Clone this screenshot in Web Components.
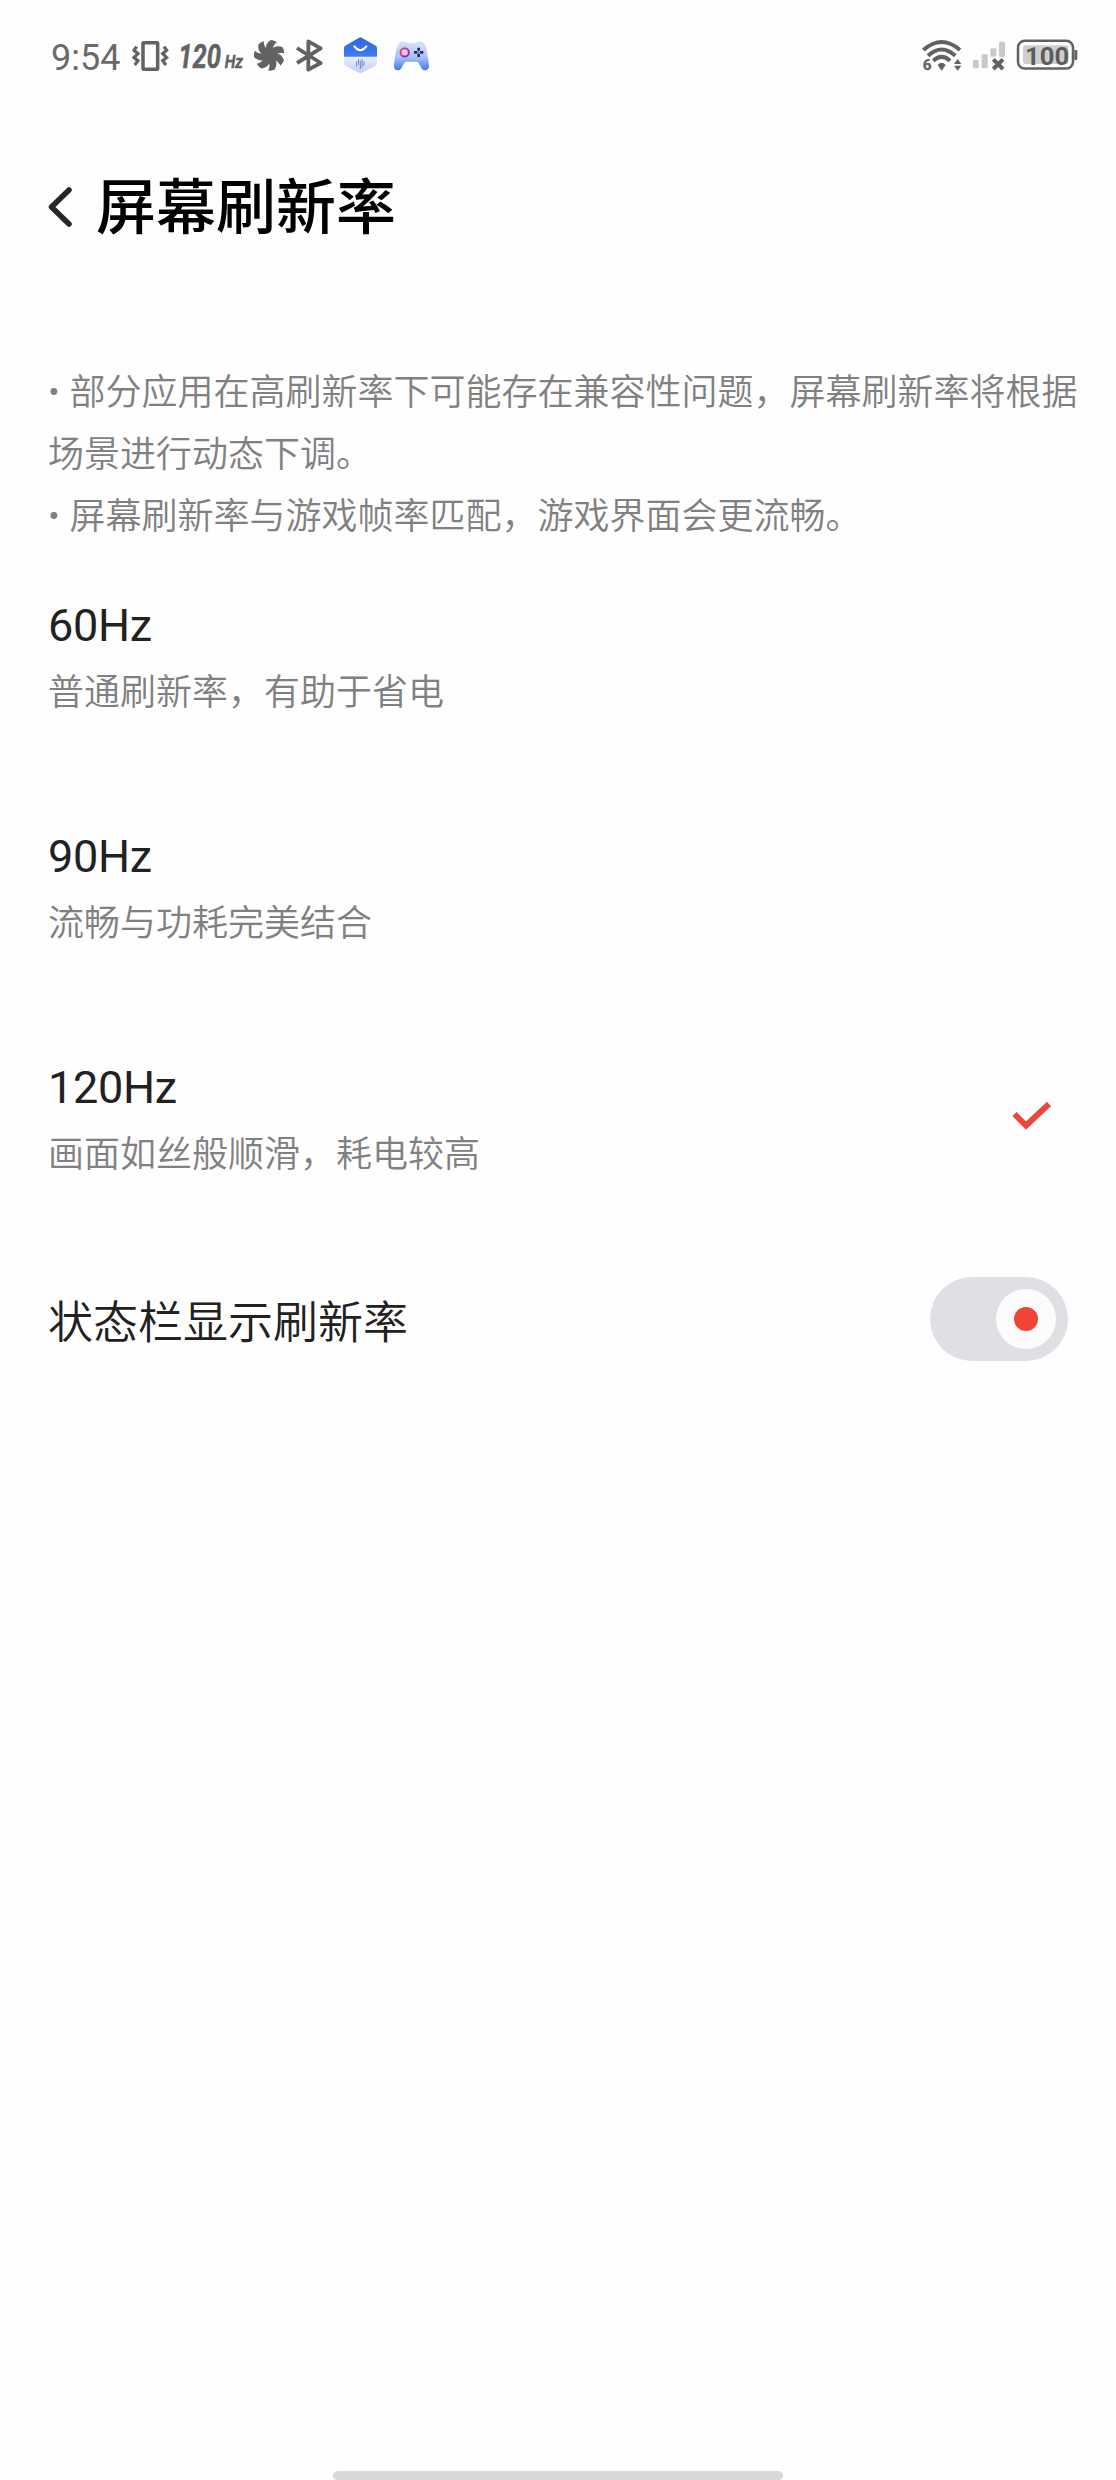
<!DOCTYPE html>
<html lang="zh-CN">
<head>
<meta charset="utf-8">
<title>屏幕刷新率</title>
<style>
  html,
  body {
    margin: 0;
    background: #fefefe;
  }
  body {
    font-family: Roboto, 'Noto Sans CJK SC', sans-serif;
    color: #212121;
  }
</style>
</head>
<body>
<refresh-rate-page></refresh-rate-page>

<script>
function define(tag, html) {
  const template = document.createElement('template')
  template.innerHTML = html
  customElements.define(
    tag,
    class extends HTMLElement {
      constructor() {
        super()
        this.attachShadow({ mode: 'open' })
        this.shadowRoot.appendChild(template.content.cloneNode(true))
      }
    }
  )
}

// every status icon is drawn on a 195 unit high strip, 3 units per pixel
const icons = {
  vibrate: {
    box: [270, 130],
    svg: `
      <rect x="309" y="53" width="44" height="80" rx="2" fill="none" stroke="#626262" stroke-width="10.500"/>
      <path d="M290 65l-8 11 12 10-12 12 12 9-10 13M372 65l8 11-12 10 12 12-12 9 10 13" fill="none" stroke="#626262" stroke-width="9.500"/>`,
  },
  rate: {
    box: [400, 218],
    svg: `
      <g fill="#626262" stroke="#626262" font-family="Roboto" font-style="italic" font-weight="700">
        <text transform="translate(416 129) scale(.76 1)" font-size="101" stroke-width="1.500">120</text>
        <text transform="translate(555 129) scale(.86 1)" font-size="54" stroke-width="1">Hz</text>
      </g>`,
  },
  fan: {
    box: [18, 132],
    svg: `
      <g fill="#626262" transform="translate(88 91)">
        ${[0, 1, 2, 3, 4, 5, 6]
          .map(
            (i) =>
              `<path transform="rotate(${(i * 360) / 7})" d="M-5 0C-16-14-12-37 5-46Q16-45 23-39C11-33 9-16 5 0Z"/>`
          )
          .join('')}
      </g>`,
  },
  bluetooth: {
    box: [150, 120],
    svg: `<path d="M171 69L242 114 205 134V49L242 70 171 114" fill="none" stroke="#626262" stroke-width="11.500" stroke-linejoin="round"/>`,
  },
  store: {
    box: [270, 165],
    svg: `
      <defs>
        <linearGradient id="top" x2="0" y2="1"><stop stop-color="#3267d8"/><stop offset="1" stop-color="#3e7df3"/></linearGradient>
        <linearGradient id="low" x2="0" y2="1"><stop stop-color="#e9eefb"/><stop offset="1" stop-color="#bdcff7"/></linearGradient>
      </defs>
      <path d="M312 95V68Q312 64 316 62L357 38Q361 36 365 38L407 62Q411 64 411 68V95Z" fill="url(#top)"/>
      <path d="M312 96H411V116Q411 120 407 122L365 143Q361 145 357 143L316 122Q312 120 312 116Z" fill="url(#low)"/>
      <path d="M343 64Q361 87 379 64" fill="none" stroke="#fff" stroke-width="6" stroke-linecap="round"/>
      <path d="M350 109V125M355.500 102V120M361 106V132M366.500 102V127M372 109V122" fill="none" stroke="#5c78ac" stroke-width="2.500"/>`,
  },
  gamepad: {
    box: [435, 165],
    svg: `
      <defs>
        <linearGradient id="pad" x2="0" y2="1"><stop stop-color="#d8e4fd"/><stop offset=".55" stop-color="#a9c1fa"/><stop offset="1" stop-color="#4576ee"/></linearGradient>
        <linearGradient id="ring" x2="1" y2="1"><stop stop-color="#ee4769"/><stop offset="1" stop-color="#7233b2"/></linearGradient>
      </defs>
      <path d="M485 50C496 47 501 55 514 55C527 55 533 47 545 50C558 54 561 76 567 119C569 132 558 140 549 134C540 127 539 111 530 110H499C490 111 489 127 480 134C470 140 460 132 462 119C467 76 470 54 485 50Z" fill="url(#pad)"/>
      <circle cx="494" cy="82" r="12.500" fill="#e9c7e9" stroke="url(#ring)" stroke-width="6"/>
      <path d="M532 68h8v8l-4 4-4-4zM532 96h8v-8l-4-4-4 4zM522 78v8h8l4-4-4-4zM550 78v8h-8l-4-4 4-4z" fill="#252d55"/>`,
  },
  wifi: {
    box: [30, 135],
    svg: `
      <g fill="none" stroke="#626262" stroke-width="12">
        <path d="M40 75Q95 27 150 75"/>
        <path d="M54 92Q95 55 136 92"/>
        <path d="M70 107Q95 84 120 107"/>
      </g>
      <path d="M83 120Q95 106 107 120L95 137Z" fill="#626262"/>
      <text x="38" y="136" font-family="Roboto" font-size="46" font-weight="700" fill="#626262" stroke="#626262">6</text>
      <path d="M132 117l11-15 11 15zM132 122l11 15 11-15z" fill="#626262"/>`,
  },
  signal: {
    box: [165, 135],
    svg: `
      <g fill="#c9c9c9">
        <rect x="189" y="105" width="17" height="25" rx="3"/>
        <rect x="215" y="88" width="18" height="42" rx="3"/>
        <rect x="241" y="70" width="18" height="25" rx="3"/>
        <rect x="267" y="50" width="18" height="46" rx="3"/>
      </g>
      <path d="M250 103l29 29M279 103l-29 29" stroke="#626262" stroke-width="12"/>`,
  },
  battery: {
    box: [300, 210],
    svg: `
      <rect x="324" y="47.500" width="165" height="83" rx="20" fill="none" stroke="#626262" stroke-width="7.500"/>
      <path d="M493 75h5q4 0 4 4v22q0 4-4 4h-5z" fill="#626262"/>
      <rect x="339" y="61" width="136" height="56" rx="9" fill="#cecece"/>
      <text x="345" y="119" font-family="Roboto" font-size="77" font-weight="700" fill="#5c5c5c">100</text>`,
  },
}

class StatusIcon extends HTMLElement {
  constructor() {
    super()
    this.attachShadow({ mode: 'open' })
  }
  connectedCallback() {
    const { box, svg } = icons[this.getAttribute('name')]
    this.shadowRoot.innerHTML = `
      <style>
        :host { display: block; flex: none; }
        svg { display: block; }
      </style>
      <svg width="${box[1] / 3}" height="65" viewBox="${box[0]} 0 ${box[1]} 195">${svg}</svg>`
  }
}
customElements.define('status-icon', StatusIcon)

define('status-bar', `
<style>
  :host {
    display: flex;
    justify-content: space-between;
    height: 65px;
    padding: 25px 36px 0 51px;
    color: #6a6a6a;
  }
  .group {
    display: flex;
  }
  .time {
    width: 79px;
    font-size: 36px;
    line-height: 66px;
  }
</style>
<div class="group">
  <span class="time"><slot></slot></span>
  <status-icon name="vibrate"></status-icon>
  <status-icon name="rate"></status-icon>
  <status-icon name="fan"></status-icon>
  <status-icon name="bluetooth"></status-icon>
  <status-icon name="store"></status-icon>
  <status-icon name="gamepad"></status-icon>
</div>
<div class="group">
  <status-icon name="wifi"></status-icon>
  <status-icon name="signal"></status-icon>
  <status-icon name="battery"></status-icon>
</div>
`)

define('page-header', `
<style>
  :host {
    display: flex;
    align-items: center;
    gap: 24px;
    height: 100px;
    padding: 67px 48px 105px;
  }
  h1 {
    margin: 0;
    padding-top: 4px;
    font-size: 60px;
    font-weight: 500;
    line-height: 96px;
    color: #000;
  }
</style>
<svg width="24" height="40" viewBox="0 0 24 40">
  <path d="M21 3L3.500 20 21 37" fill="none" stroke="#262626" stroke-width="5.500" stroke-linecap="round" stroke-linejoin="round"/>
</svg>
<h1><slot></slot></h1>
`)

define('rate-notice', `
<style>
  :host {
    display: block;
    padding: 0 30px 0 48px;
    font-size: 36px;
    font-weight: 350;
    line-height: 62px;
    word-spacing: 1px;
    color: #808080;
  }
</style>
<slot></slot>
`)

define('rate-option', `
<style>
  :host {
    display: flex;
    justify-content: space-between;
    align-items: center;
    box-sizing: border-box;
    height: 231px;
    padding: 0 65px 0 48px;
  }
  .text {
    padding-bottom: 9px;
  }
  .title {
    font-size: 45px;
    line-height: 52px;
    letter-spacing: -0.3px;
  }
  .desc {
    margin-top: 16px;
    font-size: 36px;
    font-weight: 350;
    line-height: 50px;
    color: #808080;
  }
  svg {
    display: none;
    margin-bottom: 20px;
  }
  :host([checked]) svg {
    display: block;
  }
</style>
<div class="text">
  <div class="title"><slot name="title"></slot></div>
  <div class="desc"><slot></slot></div>
</div>
<svg width="39" height="28" viewBox="0 0 39 28">
  <path d="M2.500 12L14 23.500 37 2" fill="none" stroke="#e8493b" stroke-width="6"/>
</svg>
`)

define('switch-row', `
<style>
  :host {
    display: flex;
    justify-content: space-between;
    align-items: center;
    height: 156px;
    padding: 0 48px;
    font-size: 45px;
    font-weight: 350;
  }
  .track {
    display: flex;
    justify-content: flex-end;
    align-items: center;
    box-sizing: border-box;
    width: 138px;
    height: 84px;
    padding-right: 12px;
    border-radius: 42px;
    background: #e0dfe4;
  }
  .knob {
    display: grid;
    place-items: center;
    width: 60px;
    height: 60px;
    border-radius: 50%;
    background: #fcfcfc;
  }
  .knob::after {
    content: '';
    width: 24px;
    height: 24px;
    border-radius: 50%;
    background: #f14336;
  }
</style>
<span><slot></slot></span>
<div class="track"><div class="knob"></div></div>
`)

define('home-indicator', `
<style>
  :host {
    display: block;
    width: 450px;
    height: 9px;
    margin: auto auto 0;
    border-radius: 5px;
    background: #d8d8d8;
  }
</style>
`)

define('refresh-rate-page', `
<style>
  :host {
    display: flex;
    flex-direction: column;
    width: 1116px;
    height: 2480px;
  }
</style>
<status-bar>9:54</status-bar>
<page-header>屏幕刷新率</page-header>
<rate-notice>• 部分应用在高刷新率下可能存在兼容性问题，屏幕刷新率将根据场景进行动态下调。<br>• 屏幕刷新率与游戏帧率匹配，游戏界面会更流畅。</rate-notice>
<rate-option><span slot="title">60Hz</span>普通刷新率，有助于省电</rate-option>
<rate-option><span slot="title">90Hz</span>流畅与功耗完美结合</rate-option>
<rate-option checked><span slot="title">120Hz</span>画面如丝般顺滑，耗电较高</rate-option>
<switch-row>状态栏显示刷新率</switch-row>
<home-indicator></home-indicator>
`)
</script>
</body>
</html>
